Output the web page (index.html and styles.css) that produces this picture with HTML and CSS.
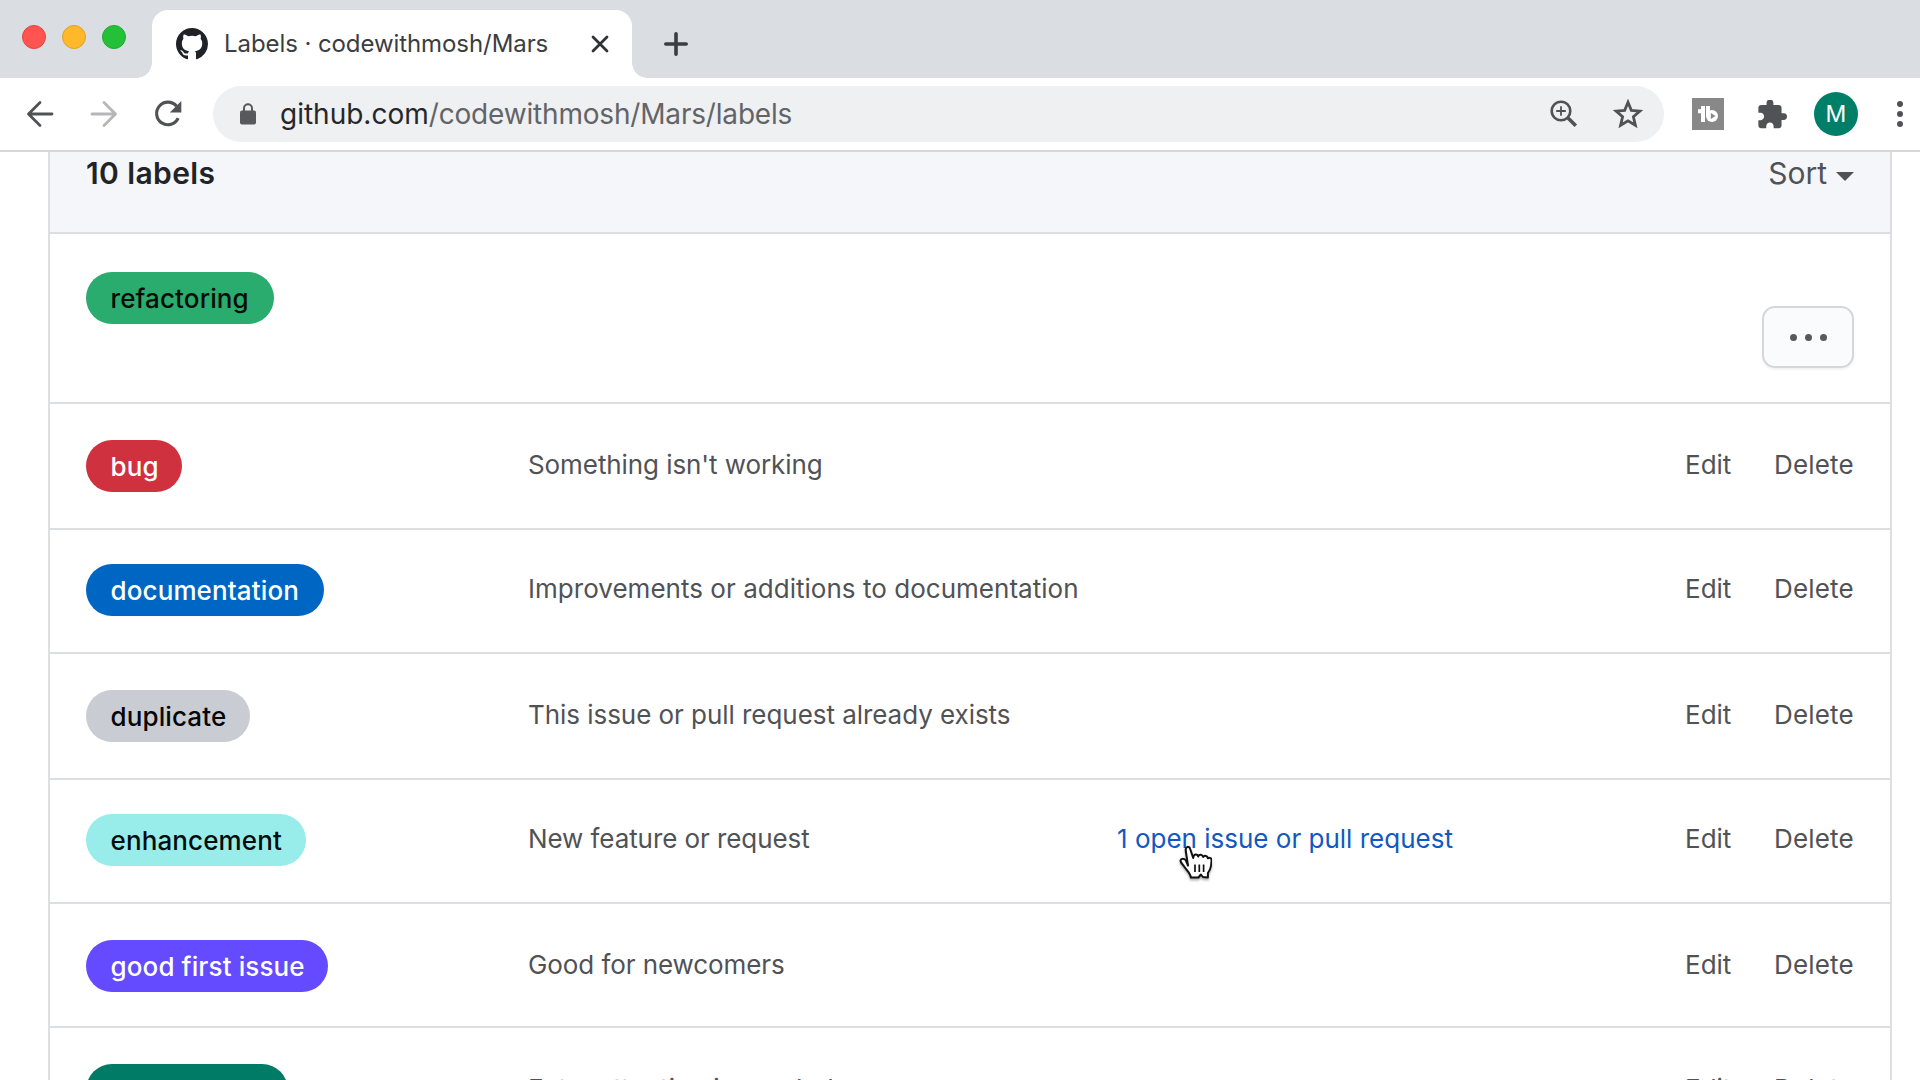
FILE: index.html
```html
<!DOCTYPE html>
<html lang="en">
<head>
<meta charset="utf-8">
<title>Labels · codewithmosh/Mars</title>
<link rel="stylesheet" href="styles.css">
</head>
<body>
<div class="browser">
  <div class="tab-strip">
    <div class="traffic-lights">
      <span class="light light-close"></span>
      <span class="light light-min"></span>
      <span class="light light-max"></span>
    </div>
    <div class="tab">
      <svg class="tab-favicon" viewBox="0 0 16 16" fill="#202228"><path d="M8 0C3.58 0 0 3.58 0 8c0 3.54 2.29 6.53 5.47 7.59.4.07.55-.17.55-.38 0-.19-.01-.82-.01-1.49-2.01.37-2.53-.49-2.69-.94-.09-.23-.48-.94-.82-1.13-.28-.15-.68-.52-.01-.53.63-.01 1.08.58 1.23.82.72 1.21 1.87.87 2.33.66.07-.52.28-.87.51-1.07-1.78-.2-3.64-.89-3.64-3.95 0-.87.31-1.59.82-2.15-.08-.2-.36-1.02.08-2.12 0 0 .67-.21 2.2.82.64-.18 1.32-.27 2-.27s1.36.09 2 .27c1.53-1.04 2.2-.82 2.2-.82.44 1.1.16 1.92.08 2.12.51.56.82 1.27.82 2.15 0 3.07-1.87 3.75-3.65 3.95.29.25.54.73.54 1.48 0 1.07-.01 1.93-.01 2.2 0 .21.15.46.55.38A8.01 8.01 0 0 0 16 8c0-4.42-3.58-8-8-8z"/></svg>
      <span class="tab-title">Labels · codewithmosh/Mars</span>
      <svg class="tab-close" viewBox="0 0 18 18" fill="none" stroke="#303236" stroke-width="2.8" stroke-linecap="round"><path d="M2 2l14 14M16 2L2 16"/></svg>
    </div>
    <svg class="new-tab" viewBox="0 0 24 24" fill="none" stroke="#3a3d41" stroke-width="3.6" stroke-linecap="round"><path d="M12 1.8v20.4M1.8 12h20.4"/></svg>
  </div>

  <div class="toolbar">
    <svg class="nav-icon nav-back" viewBox="0 0 28 28" fill="none" stroke="#505255" stroke-width="2.8" stroke-linecap="round" stroke-linejoin="round"><path d="M26 14H3M14 2.5L2.5 14 14 25.5"/></svg>
    <svg class="nav-icon nav-forward" viewBox="0 0 28 28" fill="none" stroke="#b5b6b8" stroke-width="2.8" stroke-linecap="round" stroke-linejoin="round"><path d="M2 14h23M14 2.5L25.5 14 14 25.5"/></svg>
    <svg class="nav-icon nav-reload" viewBox="0 0 28 28"><path d="M24.2 18.2A11.3 11.3 0 1 1 22.6 6.2" fill="none" stroke="#505255" stroke-width="3.1"/><path d="M27.3 1v11.5H15.8z" fill="#505255"/></svg>
    <div class="omnibox">
      <svg class="lock" viewBox="0 0 16 22"><rect y="7.5" width="16" height="14" rx="2" fill="#57595c"/><path d="M4 8.5V5.200a4 4 0 0 1 8 0v3.300" fill="none" stroke="#57595c" stroke-width="2"/></svg>
      <span class="url"><span class="url-host">github.com</span>/codewithmosh/Mars/labels</span>
      <svg class="zoom-icon" viewBox="0 0 28 28" fill="none" stroke="#505255"><circle cx="11" cy="11" r="9.3" stroke-width="2.6"/><path d="M18 18l7.800 7.800" stroke-width="3.6"/><path d="M11 6.200v9.600M6.200 11h9.600" stroke-width="1.8"/></svg>
      <svg class="star" viewBox="0 0 30 29" fill="none" stroke="#505255" stroke-width="2.8"><path d="M15 3.300l3.300 8.100 8.700.700-6.600 5.700 2 8.500L15 21.800l-7.400 4.500 2-8.500L3 12.100l8.700-.700z"/></svg>
    </div>
    <div class="ext-tb"><svg viewBox="0 0 32 32" fill="none" stroke="#fff" stroke-width="4"><path d="M6 13.200h5M11 8v16"/><path d="M16 8v10"/><circle cx="20" cy="18" r="6" fill="#fff" stroke="none"/><path d="M18.800 15l4.700 3-4.700 3z" fill="#888" stroke="none"/></svg></div>
    <svg class="puzzle" viewBox="1 1.5 22 21" fill="#505255"><path d="M20.500 11H19V7c0-1.100-.9-2-2-2h-4V3.500a2.500 2.500 0 0 0-5 0V5H4c-1.100 0-1.990.9-1.990 2v3.800H3.500c1.490 0 2.700 1.210 2.700 2.700s-1.210 2.700-2.700 2.700H2V20c0 1.100.9 2 2 2h3.800v-1.500c0-1.490 1.210-2.700 2.700-2.700s2.700 1.210 2.700 2.700V22H17c1.100 0 2-.9 2-2v-4h1.500a2.500 2.500 0 0 0 0-5z"/></svg>
    <div class="avatar">M</div>
    <svg class="kebab" viewBox="0 0 6 26" fill="#505255"><circle cx="3" cy="3" r="3"/><circle cx="3" cy="13" r="3"/><circle cx="3" cy="23" r="3"/></svg>
  </div>

  <main class="page">
    <section class="box">
      <header class="box-header">
        <h1 class="box-title">10 labels</h1>
        <div class="sort">Sort<span class="caret"></span></div>
      </header>

      <div class="row row-tall">
        <div><span class="label label-refactoring">refactoring</span></div>
        <button class="more" aria-label="More"><span class="dot"></span><span class="dot"></span><span class="dot"></span></button>
      </div>
      <div class="row">
        <div><span class="label label-bug">bug</span></div>
        <div class="desc desc-tight">Something isn't working</div><div></div>
        <div class="action">Edit</div><div class="action action-delete">Delete</div>
      </div>
      <div class="row row-short">
        <div><span class="label label-documentation">documentation</span></div>
        <div class="desc">Improvements or additions to documentation</div><div></div>
        <div class="action">Edit</div><div class="action action-delete">Delete</div>
      </div>
      <div class="row">
        <div><span class="label label-duplicate">duplicate</span></div>
        <div class="desc desc-exists">This issue or pull request already exists</div><div></div>
        <div class="action">Edit</div><div class="action action-delete">Delete</div>
      </div>
      <div class="row row-short">
        <div><span class="label label-enhancement">enhancement</span></div>
        <div class="desc desc-tight">New feature or request</div>
        <div class="issues">1 open issue or pull request
          <svg class="cursor" viewBox="0 0 34 36"><path d="M10 20.500L7.700 5.500C7.200 1.500 11.300.5 12.200 4l3 9c.2-4 4.300-4.600 5-1.500 1-2.700 4.300-2.200 5 .5 1.300-2 4.300-1.300 4.700 1.300 2.100-1.200 4.100 0 3.600 2.900-.2 5-.6 8-3.600 11.800v4.500l-5-.5-2-2.500-2.500 3h-7.500c-.6-4.200-3.700-6.700-6.400-10.500C4.200 19 2.200 17 2.500 15.500c.5-2.500 3.600-2.300 5.400 0z" fill="#fff" stroke="#111" stroke-width="2" stroke-linejoin="round"/><path d="M17 19.500v7.500M21.300 19.500v7.500M25.600 19.500v7.500" stroke="#111" stroke-width="1.7"/></svg>
        </div>
        <div class="action">Edit</div><div class="action action-delete">Delete</div>
      </div>
      <div class="row row-good">
        <div><span class="label label-good">good first issue</span></div>
        <div class="desc desc-tight">Good for newcomers</div><div></div>
        <div class="action">Edit</div><div class="action action-delete">Delete</div>
      </div>
      <div class="row">
        <div><span class="label label-help">help wanted</span></div>
        <div class="desc">Extra attention is needed</div><div></div>
        <div class="action">Edit</div><div class="action action-delete">Delete</div>
      </div>
    </section>
  </main>
</div>
</body>
</html>
```
FILE: styles.css
```css
* { box-sizing: border-box; }
body {
  margin: 0;
  background: #fff;
  font-family: Inter, "Liberation Sans", sans-serif;
  color: #505256;
}
svg { display: block; flex: none; }
.browser {
  width: 1920px;
  height: 1080px;
  overflow: hidden;
  display: flex;
  flex-direction: column;
}

/* Tab strip */
.tab-strip {
  flex: none;
  height: 78px;
  padding: 10px 0 0 22px;
  background: #dadde1;
  display: flex;
}
.traffic-lights {
  width: 130px;
  padding-top: 15px;
  display: flex;
  gap: 16px;
}
.light { width: 24px; height: 24px; border-radius: 50%; border: 1px solid; }
.light-close { background: #ff544f; border-color: #e2463f; }
.light-min { background: #ffb829; border-color: #e0a12c; }
.light-max { background: #24c138; border-color: #1dab2e; }
.tab {
  position: relative;
  width: 480px;
  height: 68px;
  padding: 0 23px 2px 24px;
  border-radius: 16px 16px 0 0;
  background: #fff;
  display: flex;
  align-items: center;
}
.tab::before, .tab::after {
  content: "";
  position: absolute;
  bottom: 0;
  width: 15px;
  height: 15px;
}
.tab::before { left: -15px; background: radial-gradient(circle at 0 0, transparent 14.5px, #fff 15px); }
.tab::after { right: -15px; background: radial-gradient(circle at 100% 0, transparent 14.5px, #fff 15px); }
.tab-favicon { width: 32px; height: 32px; margin-top: 2px; }
.tab-title {
  margin-left: 16px;
  flex: 1;
  font-size: 24px;
  letter-spacing: -.08px;
  color: #3b3d41;
  white-space: nowrap;
}
.tab-close { width: 18px; height: 18px; margin-top: 2px; }
.new-tab { width: 24px; height: 24px; margin: 22px 0 0 32px; }

/* Toolbar */
.toolbar {
  flex: none;
  height: 74px;
  padding-left: 26px;
  border-bottom: 2px solid #d5d7d9;
  display: flex;
  align-items: center;
}
.nav-icon { width: 28px; height: 28px; }
.nav-forward { margin-left: 36px; }
.nav-reload { margin-left: 36px; }
.omnibox {
  width: 1451px;
  height: 56px;
  margin-left: 31px;
  padding: 0 21px 0 27px;
  border-radius: 28px;
  background: #eff0f2;
  display: flex;
  align-items: center;
}
.lock { width: 16px; height: 22px; }
.url {
  flex: 1;
  margin-left: 24px;
  font-size: 28px;
  letter-spacing: -.18px;
  color: #626468;
  white-space: nowrap;
}
.url-host { color: #25272a; letter-spacing: 0; }
.zoom-icon { width: 28px; height: 28px; }
.star { width: 30px; height: 29px; margin: 0 0 1px 35px; }
.ext-tb { width: 32px; height: 32px; margin-left: 28px; background: #888; }
.puzzle { width: 30px; height: 29px; margin-left: 33px; }
.avatar {
  width: 44px;
  height: 44px;
  margin-left: 27px;
  border-radius: 50%;
  background: #007f68;
  color: #fff;
  font-size: 23px;
  line-height: 44px;
  text-align: center;
}
.kebab { width: 6px; height: 26px; margin-left: 39px; }

/* Labels list */
.page { flex: 1; min-height: 0; padding: 0 28px 0 48px; }
.box { border: solid #dcdee1; border-width: 0 2px; }
.box-header {
  height: 82px;
  padding: 0 36px;
  border-bottom: 2px solid #dcdee1;
  background: #f5f6fa;
  display: flex;
  justify-content: space-between;
}
.box-title {
  margin: 1px 0 0;
  font-size: 30px;
  font-weight: 600;
  letter-spacing: .4px;
  line-height: 40px;
  color: #212328;
}
.sort {
  display: flex;
  margin-top: 1px;
  font-size: 30px;
  line-height: 40px;
}
.caret {
  margin: 19px 0 0 9px;
  width: 18px;
  height: 9px;
  background: #505256;
  clip-path: polygon(0 0, 100% 0, 50% 100%);
}
.row {
  height: 126px;
  padding: 36px 36px 0;
  border-bottom: 2px solid #dcdee1;
  display: grid;
  grid-template-columns: 442px 589px 568px 89px auto;
  align-items: start;
  font-size: 26px;
  line-height: 50px;
  white-space: nowrap;
}
.row-short { height: 124px; padding-top: 34px; }
.row-good { height: 124px; }
.row-tall {
  height: 170px;
  padding-top: 38px;
  grid-template-columns: 1fr 92px;
}
.desc { letter-spacing: .03px; }
.desc-tight { letter-spacing: -.08px; }
.desc-exists { letter-spacing: -.05px; }
.action-delete { letter-spacing: .15px; }
.label {
  display: block;
  width: max-content;
  height: 52px;
  padding: 0 24.5px;
  border-radius: 26px;
  font-weight: 500;
  letter-spacing: .12px;
  line-height: 53px;
  color: #fff;
}
.label-refactoring { width: 188px; background: #29ac6e; color: #050d08; }
.label-bug { width: 96px; background: #d0313f; }
.label-documentation { width: 238px; background: #0066c3; }
.label-duplicate { width: 164px; background: #c9ccd2; color: #050608; }
.label-enhancement { width: 220px; background: #98edeb; color: #050d0d; }
.label-good { width: 242px; background: #644bff; }
.label-help { width: 202px; background: #007b65; }
.issues { position: relative; color: #1159c1; }
.cursor {
  position: absolute;
  left: 61px;
  top: 31px;
  width: 34px;
  height: 36px;
  filter: drop-shadow(0 2px 1px rgba(0, 0, 0, .3));
}
.more {
  width: 92px;
  height: 62px;
  margin: 34px 0 0;
  padding: 0;
  border: 2px solid #d5d7da;
  border-radius: 13px;
  background: #fafbfc;
  box-shadow: 0 2px 2px rgba(0, 0, 0, .05);
  display: flex;
  justify-content: center;
  align-items: center;
  gap: 8px;
}
.dot { width: 7px; height: 7px; border-radius: 50%; background: #57595d; }
```
